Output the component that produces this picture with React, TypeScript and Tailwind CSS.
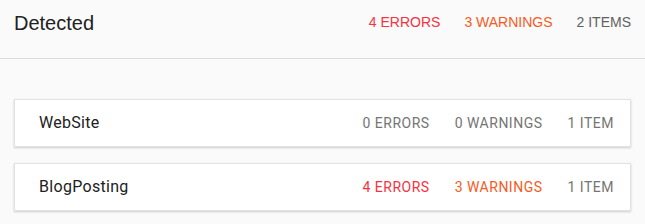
import React from 'react';

type Row = {
  name: string;
  errors: number;
  warnings: number;
  items: number;
};

const rows: Row[] = [
  { name: 'WebSite', errors: 0, warnings: 0, items: 1 },
  { name: 'BlogPosting', errors: 4, warnings: 3, items: 1 },
];

function plural(n: number, word: string) {
  return `${n} ${word}${n === 1 ? '' : 'S'}`;
}

function Card({ row }: { row: Row }) {
  return (
    <div className="flex h-[48px] items-center justify-between border border-[#e2e2e2] bg-white pl-6 pr-4 shadow-[0_1px_2px_rgba(0,0,0,0.18)]">
      <span className="text-[16px] leading-[24px] tracking-[0.3px] text-[#212121]">{row.name}</span>
      <div className="flex gap-[25px] text-[14px] leading-[24px] tracking-[0.5px]">
        <span className={row.errors ? 'text-[#f5333f]' : 'text-[#757575]'}>{plural(row.errors, 'ERROR')}</span>
        <span className={row.warnings ? 'text-[#f75a23]' : 'text-[#757575]'}>{plural(row.warnings, 'WARNING')}</span>
        <span className="text-[#757575]">{plural(row.items, 'ITEM')}</span>
      </div>
    </div>
  );
}

export default function App() {
  return (
    <div className="min-h-screen w-[645px] bg-[#fafafa]">
      <header className="flex h-[59px] items-start justify-between border-b border-[#dcdcdc] px-[14px] font-['Liberation_Sans',Arial,sans-serif]">
        <h1 className="mt-[11px] text-[20px] leading-[24px] text-[#212121]">Detected</h1>
        <div className="mt-[10px] flex gap-[24px] text-[14px] leading-[24px]">
          <span className="text-[#f5333f]">4 ERRORS</span>
          <span className="text-[#f75a23]">3 WARNINGS</span>
          <span className="text-[#616161]">2 ITEMS</span>
        </div>
      </header>
      <main className="flex flex-col gap-4 px-[14px] pt-[40px] font-['Roboto',sans-serif]">
        {rows.map((r) => (
          <Card key={r.name} row={r} />
        ))}
      </main>
    </div>
  );
}
